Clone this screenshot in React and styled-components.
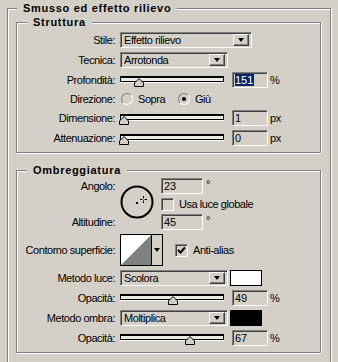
import React from 'react';
import styled, { createGlobalStyle } from 'styled-components';

const GlobalStyle = createGlobalStyle`
  html, body {
    margin: 0;
    padding: 0;
    background: #d4d0c8;
  }
  body {
    font-family: "Liberation Sans", Arial, sans-serif;
    font-size: 11px;
    letter-spacing: -0.45px;
    color: #000;
  }
`;

const Page = styled.div`
  width: 338px;
  height: 362px;
  overflow: hidden;
  box-sizing: border-box;
  padding: 1px 0 0 7px;
  background: #d4d0c8;
`;

const Group = styled.fieldset`
  margin: ${p => p.$margin || '0'};
  padding: ${p => p.$pad || '0'};
  min-width: 0;
  width: ${p => (p.$w ? `${p.$w}px` : 'auto')};
  box-sizing: border-box;
  border: 1px solid #808080;
  box-shadow: inset 1px 1px 0 #fff, 1px 1px 0 #fff;
`;

const Legend = styled.legend`
  margin-left: ${p => p.$indent}px;
  padding: 0 6px;
  font: bold 11px/14px "Liberation Sans", Arial, sans-serif;
  letter-spacing: 0.7px;
  background: #d4d0c8;
`;

const Form = styled.div`
  display: grid;
  grid-template-columns: 98px 1fr;
  column-gap: 5px;
  row-gap: 4px;
  align-items: center;
  padding: ${p => p.$pad};
`;

const Label = styled.span`
  text-align: right;
  white-space: nowrap;
  line-height: 12px;
`;

const Controls = styled.div`
  display: flex;
  align-items: center;
  height: ${p => p.$h || 16}px;
`;

const Select = styled.div`
  width: ${p => p.$w}px;
  height: 16px;
  box-sizing: border-box;
  display: flex;
  align-items: center;
  justify-content: space-between;
  border: 1px solid;
  border-color: #808080 #fff #fff #808080;
  box-shadow: inset 1px 1px 0 #404040, inset -1px -1px 0 #d4d0c8;
  padding: 0 2px 0 3px;
  line-height: 12px;
`;

const DropButton = styled.span`
  width: 16px;
  height: 12px;
  box-sizing: border-box;
  display: flex;
  align-items: center;
  justify-content: center;
  border: 1px solid;
  border-color: #fff #404040 #404040 #fff;
  box-shadow: inset -1px -1px 0 #808080;
  background: #d4d0c8;
`;

const Arrow = styled.span`
  width: 0;
  height: 0;
  border-left: 3.5px solid transparent;
  border-right: 3.5px solid transparent;
  border-top: 4px solid #000;
`;

const SliderBox = styled.div`
  position: relative;
  width: 104px;
  height: 16px;
  flex: none;
`;

const Track = styled.div`
  margin-top: 4px;
  height: 6px;
  box-sizing: border-box;
  border: 1px solid #000;
  border-top-width: 2px;
  background: #ecebe6;
  box-shadow: 0 1px 0 #fff;
`;

const ThumbMark = styled.svg`
  position: absolute;
  top: 6px;
`;

const NumField = styled.div`
  width: ${p => p.$w}px;
  height: 16px;
  margin-left: ${p => p.$gap}px;
  box-sizing: border-box;
  border: 1px solid;
  border-color: #808080 #fff #fff #808080;
  box-shadow: inset 1px 1px 0 #404040;
  padding: 1px 0 0 2px;
  line-height: 13px;
  letter-spacing: 0;
  flex: none;
`;

const Selected = styled.span`
  background: #0a246a;
  color: #fff;
  padding-right: 1px;
`;

const Unit = styled.span`
  margin-left: ${p => p.$gap || 2}px;
  align-self: ${p => (p.$top ? 'flex-start' : 'center')};
`;

const RadioOption = styled.span`
  display: flex;
  align-items: center;
  gap: 5px;
  width: ${p => (p.$w ? `${p.$w}px` : 'auto')};
`;

const RadioDot = styled.span`
  width: 12px;
  height: 12px;
  box-sizing: border-box;
  border-radius: 50%;
  border: 1px solid;
  border-color: #808080 #fff #fff #808080;
  display: flex;
  align-items: center;
  justify-content: center;
  margin-left: 1px;
  &::after {
    content: '';
    width: 4px;
    height: 4px;
    border-radius: 50%;
    background: ${p => (p.$on ? '#000' : 'transparent')};
  }
`;

const CheckBox = styled.span`
  width: 13px;
  height: 13px;
  box-sizing: border-box;
  border: 1px solid;
  border-color: #808080 #fff #fff #808080;
  box-shadow: inset 1px 1px 0 #404040;
  display: flex;
  align-items: center;
  justify-content: center;
  margin-left: ${p => p.$gap || 0}px;
  margin-right: 5px;
  flex: none;
`;

const AngleBlock = styled.div`
  grid-column: 1 / -1;
  display: grid;
  grid-template-columns: 98px 36px 1fr;
  grid-template-rows: 16px 14px 16px;
  column-gap: 5px;
  row-gap: 3px;
  align-items: center;
`;

const Dial = styled.svg`
  grid-column: 2;
  grid-row: 1 / 4;
  align-self: start;
  margin-top: 7px;
`;

const Contour = styled.div`
  width: 43px;
  height: 32px;
  box-sizing: border-box;
  border: 1px solid #000;
  display: flex;
  flex: none;
`;

const ContourArrow = styled.span`
  flex: 1;
  border-left: 1px solid #000;
  display: flex;
  align-items: center;
  justify-content: center;
`;

const Swatch = styled.div`
  width: 32px;
  height: 16px;
  margin-left: 2px;
  box-sizing: border-box;
  border: 1px solid #000;
  background: ${p => p.$color};
`;

function Slider({ pct }) {
  return (
    <SliderBox>
      <Track />
      <ThumbMark width="10" height="9" viewBox="0 0 10 9" style={{ left: `${pct * 0.99 - 1}px` }}>
        <polygon points="5,0.5 9.5,5 9.5,8.5 0.5,8.5 0.5,5" fill="#d4d0c8" stroke="#000" />
      </ThumbMark>
    </SliderBox>
  );
}

function Dropdown({ w, children }) {
  return (
    <Select $w={w}>
      <span>{children}</span>
      <DropButton><Arrow /></DropButton>
    </Select>
  );
}

const Check = () => (
  <svg width="9" height="9" viewBox="0 0 9 9">
    <path d="M1 4 L3.5 6.5 L8 1.5" fill="none" stroke="#000" strokeWidth="2" />
  </svg>
);

export default function App() {
  return (
    <>
      <GlobalStyle />
      <Page>
        <Group $w={324} $pad="0 9px 20px 8px">
          <Legend $indent={1}>Smusso ed effetto rilievo</Legend>

          <Group>
            <Legend $indent={10}>Struttura</Legend>
            <Form $pad="3px 0 6px">
              <Label>Stile:</Label>
              <Controls><Dropdown w={132}>Effetto rilievo</Dropdown></Controls>

              <Label>Tecnica:</Label>
              <Controls><Dropdown w={108}>Arrotonda</Dropdown></Controls>

              <Label>Profondità:</Label>
              <Controls>
                <Slider pct={15.1} />
                <NumField $w={36} $gap={8}><Selected>151</Selected></NumField>
                <Unit>%</Unit>
              </Controls>

              <Label>Direzione:</Label>
              <Controls $h={14}>
                <RadioOption $w={57}><RadioDot />Sopra</RadioOption>
                <RadioOption><RadioDot $on />Giù</RadioOption>
              </Controls>

              <Label>Dimensione:</Label>
              <Controls>
                <Slider pct={0.4} />
                <NumField $w={36} $gap={8}>1</NumField>
                <Unit>px</Unit>
              </Controls>

              <Label>Attenuazione:</Label>
              <Controls>
                <Slider pct={0} />
                <NumField $w={36} $gap={8}>0</NumField>
                <Unit>px</Unit>
              </Controls>
            </Form>
          </Group>

          <Group $margin="10px 0 0">
            <Legend $indent={10}>Ombreggiatura</Legend>
            <Form $pad="1px 0 6px">
              <AngleBlock>
                <Label style={{ gridRow: 1 }}>Angolo:</Label>
                <Dial width="34" height="34" viewBox="0 0 34 34">
                  <circle cx="17" cy="17" r="15.5" fill="none" stroke="#000" strokeWidth="2" />
                  <rect x="16" y="17" width="2" height="2" fill="#000" />
                  <path d="M23.5 11v2.5M23.5 15.5v2.5M20 14.5h2.5M24.5 14.5h2.5" stroke="#000" strokeWidth="1" />
                </Dial>
                <Controls style={{ gridColumn: 3, gridRow: 1 }}>
                  <NumField $w={42} $gap={0}>23</NumField>
                  <Unit $gap={3} $top>°</Unit>
                </Controls>
                <Controls $h={14} style={{ gridColumn: 3, gridRow: 2 }}>
                  <CheckBox />Usa luce globale
                </Controls>
                <Label style={{ gridRow: 3 }}>Altitudine:</Label>
                <Controls style={{ gridColumn: 3, gridRow: 3 }}>
                  <NumField $w={42} $gap={0}>45</NumField>
                  <Unit $gap={3} $top>°</Unit>
                </Controls>
              </AngleBlock>

              <Label>Contorno superficie:</Label>
              <Controls $h={32}>
                <Contour>
                  <svg width="30" height="30" viewBox="0 0 30 30">
                    <rect width="30" height="30" fill="#fff" />
                    <polygon points="0,30 30,0 30,30" fill="#808080" />
                  </svg>
                  <ContourArrow><Arrow /></ContourArrow>
                </Contour>
                <CheckBox $gap={12}><Check /></CheckBox>Anti-alias
              </Controls>

              <Label>Metodo luce:</Label>
              <Controls>
                <Dropdown w={108}>Scolora</Dropdown>
                <Swatch $color="#fff" />
              </Controls>

              <Label>Opacità:</Label>
              <Controls>
                <Slider pct={49} />
                <NumField $w={36} $gap={8}>49</NumField>
                <Unit>%</Unit>
              </Controls>

              <Label>Metodo ombra:</Label>
              <Controls>
                <Dropdown w={108}>Moltiplica</Dropdown>
                <Swatch $color="#000" />
              </Controls>

              <Label>Opacità:</Label>
              <Controls>
                <Slider pct={67} />
                <NumField $w={36} $gap={8}>67</NumField>
                <Unit>%</Unit>
              </Controls>
            </Form>
          </Group>
        </Group>
      </Page>
    </>
  );
}
